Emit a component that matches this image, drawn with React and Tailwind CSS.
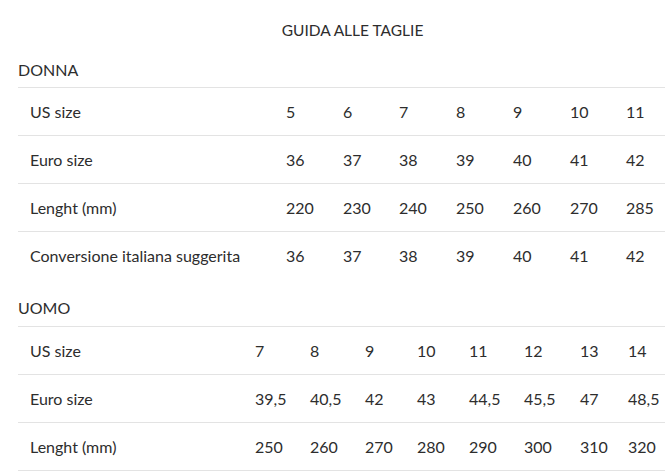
import React from "react";

const donnaW = ["w-[57px]", "w-[56px]", "w-[57px]", "w-[57px]", "w-[57px]", "w-[56px]", "w-[51px]"];
const uomoW = ["w-[55px]", "w-[55px]", "w-[52px]", "w-[52px]", "w-[55px]", "w-[56px]", "w-[48px]", "w-[49px]"];

const donna = [
  ["US size", ["5", "6", "7", "8", "9", "10", "11"]],
  ["Euro size", ["36", "37", "38", "39", "40", "41", "42"]],
  ["Lenght (mm)", ["220", "230", "240", "250", "260", "270", "285"]],
  ["Conversione italiana suggerita", ["36", "37", "38", "39", "40", "41", "42"]],
];

const uomo = [
  ["US size", ["7", "8", "9", "10", "11", "12", "13", "14"]],
  ["Euro size", ["39,5", "40,5", "42", "43", "44,5", "45,5", "47", "48,5"]],
  ["Lenght (mm)", ["250", "260", "270", "280", "290", "300", "310", "320"]],
];

function Table({ rows, labelW, widths, bottom }) {
  return (
    <div className={bottom ? "border-b border-[#e3e3e3]" : ""}>
      {rows.map(([label, vals]) => (
        <div key={label} className="flex h-[48px] items-center border-t border-[#e3e3e3]">
          <div className={`${labelW} shrink-0 pl-3 whitespace-nowrap`}>{label}</div>
          {vals.map((v, i) => (
            <div key={i} className={`${widths[i]} shrink-0 pl-3 whitespace-nowrap`}>
              {v}
            </div>
          ))}
        </div>
      ))}
    </div>
  );
}

export default function App() {
  return (
    <div className="w-[665px] h-[473px] overflow-hidden bg-white text-[#2d2d2d] font-['Lato',sans-serif] text-[16px] leading-[20px]">
      <div className="flex h-[60px] items-center justify-center pl-[40px] text-[15.5px]">GUIDA ALLE TAGLIE</div>
      <div className="pl-[18px]">
        <div className="pb-[7px]">DONNA</div>
        <Table rows={donna} labelW="w-[256px]" widths={donnaW} />
        <div className="mt-[19px] pb-[8px]">UOMO</div>
        <Table rows={uomo} labelW="w-[225px]" widths={uomoW} bottom />
      </div>
    </div>
  );
}
